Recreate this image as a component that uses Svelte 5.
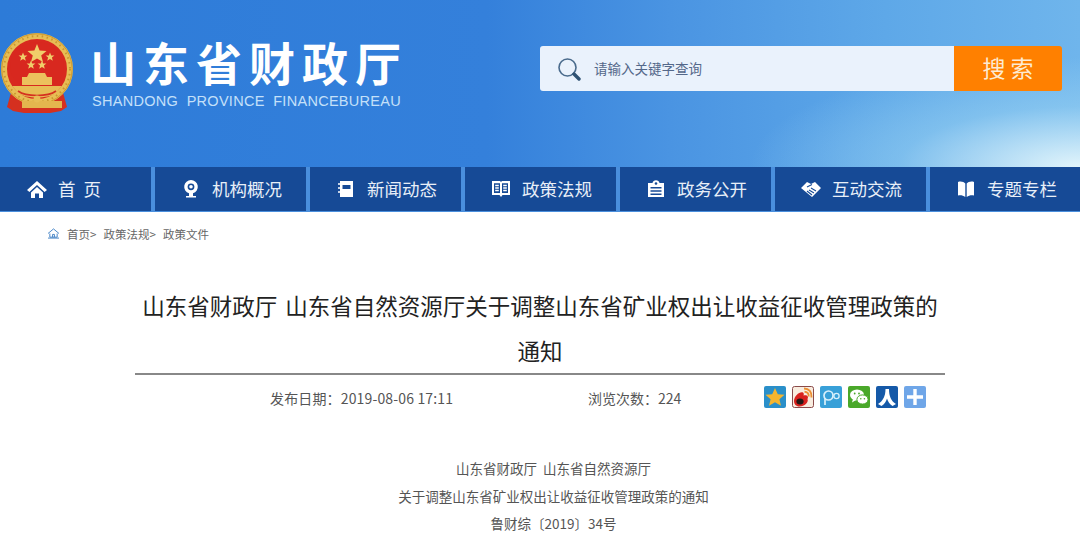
<script>
  const nav = [
    { t: '首  页', i: 'home' },
    { t: '机构概况', i: 'pin' },
    { t: '新闻动态', i: 'note' },
    { t: '政策法规', i: 'book' },
    { t: '政务公开', i: 'doc' },
    { t: '互动交流', i: 'hands' },
    { t: '专题专栏', i: 'open' }
  ];
  const stars = [[23, 24], [50, 24], [31, 32], [42, 32]];
</script>

<div class="page">
  <header class="top">
    <svg class="emblem" viewBox="0 0 74 80" width="74" height="80" aria-hidden="true">
      <path d="M12 56 L7 74 L13 78 L24 80 H50 L61 78 L67 74 L62 56 Z" fill="#d5301f"/>
      <circle cx="37" cy="36" r="33" fill="#d8291f" stroke="#e7bd55" stroke-width="6"/>
      <circle cx="37" cy="36" r="35.2" fill="none" stroke="#d09a2e" stroke-width="1"/>
      <circle cx="37" cy="36" r="33" fill="none" stroke="#c9962f" stroke-width="2" stroke-dasharray="1.5 3.5"/>
      <ellipse cx="37" cy="33" rx="27" ry="24" fill="#d8281f"/>
      <polygon points="37,11 39.6,17.4 46.5,18 41.2,22.4 43,29 37,25.4 31,29 32.8,22.4 27.5,18 34.4,17.4" fill="#f0cd6a"/>
      {#each stars as s}
        <polygon transform="translate({s[0]} {s[1]})" points="0,-4.5 1.2,-1.4 4.4,-1.4 1.9,.6 2.8,3.8 0,2 -2.8,3.8 -1.9,.6 -4.4,-1.4 -1.2,-1.4" fill="#f0cd6a"/>
      {/each}
      <path d="M29 40 H45 L47 44 H52 V52 H22 V44 H27 Z" fill="#ecc15d"/>
      <path d="M12 53 H62 L56 60 C48 66 26 66 18 60 Z" fill="#e7bd55"/>
      <path d="M18 58 C26 64 48 64 56 58" fill="none" stroke="#d5301f" stroke-width="1.6"/>
      <path d="M22 68 H62 V75 H22 Z" fill="#e4b64e"/>
      <circle cx="37" cy="66" r="3.4" fill="#e7bd55"/>
    </svg>
    <div class="brand">
      <div class="cn">山东省财政厅</div>
      <div class="en">SHANDONG&nbsp; PROVINCE&nbsp; FINANCEBUREAU</div>
    </div>
    <div class="search">
      <div class="field">
        <svg viewBox="0 0 24 24" width="24" height="24" aria-hidden="true">
          <circle cx="10.5" cy="10.5" r="8.5" fill="none" stroke="#4a6b8c" stroke-width="1.6"/>
          <path d="M17 17 L22 22" stroke="#2f5273" stroke-width="3.4" stroke-linecap="round"/>
        </svg>
        <span>请输入关键字查询</span>
      </div>
      <div class="btn">搜 索</div>
    </div>
  </header>

  <nav class="nav">
    {#each nav as n, idx}
      <div class="item" class:first={idx === 0}>
        <svg viewBox="0 0 20 20" width="20" height="20" aria-hidden="true">
          {#if n.i === 'home'}
            <path d="M10 2 L20 11 L17.6 13 L10 6 L2.4 13 L0 11 Z" fill="#fff"/>
            <path d="M4 13.5 L10 8 L16 13.5 V19 H12 V14.5 H8 V19 H4 Z" fill="#fff"/>
          {:else if n.i === 'pin'}
            <path fill-rule="evenodd" d="M10 1 A6.8 6.8 0 0 1 12 14.3 V17 H15 V18.6 H5 V17 H8 V14.3 A6.8 6.8 0 0 1 10 1 Z M10 4.4 A3.4 3.4 0 1 0 10 11.2 A3.4 3.4 0 1 0 10 4.4 Z" fill="#fff"/>
            <circle cx="10" cy="7.8" r="1.8" fill="#fff"/>
          {:else if n.i === 'note'}
            <path fill-rule="evenodd" d="M4 2 H17 V18 H4 Z M6.5 6 V10 H14.5 V6 Z" fill="#fff"/>
            <path d="M2 5 H5 M2 9 H5 M2 13 H5" stroke="#fff" stroke-width="1.4"/>
          {:else if n.i === 'book'}
            <path fill-rule="evenodd" d="M1 2 H9 L10 3 L11 2 H19 V16 H11.5 L10 18 L8.5 16 H1 Z M3 4.2 V14 H9 V4.2 Z M11 4.2 V14 H17 V4.2 Z" fill="#fff"/>
            <path d="M4.2 6.5 H7.8 M4.2 9 H7.8 M4.2 11.5 H7.8 M12.2 6.5 H15.8 M12.2 9 H15.8 M12.2 11.5 H15.8" stroke="#fff" stroke-width="1.3"/>
          {:else if n.i === 'doc'}
            <path fill-rule="evenodd" d="M2 4 H6.5 A3.6 3.6 0 0 1 13.5 4 H18 V18 H2 Z M4.5 8 V9.5 H15.5 V8 Z M4.5 11.2 V12.7 H15.5 V11.2 Z M4.5 14.4 V15.9 H15.5 V14.4 Z" fill="#fff"/>
            <circle cx="10" cy="4.5" r="1.3" fill="#164a96"/>
          {:else if n.i === 'hands'}
            <path d="M0 9 L6 3 L10 5 L14 3 L20 9 L11 18 Z" fill="#fff"/>
            <path d="M6 8 L11 5.5 M8 11 L13 14 M6 12 L11 16 M10 9 L15 12" stroke="#164a96" stroke-width="1.1" fill="none"/>
          {:else}
            <path d="M2 3 C5 2 8 3 9.3 4.5 V18 C7 16.5 5 16 2 16.5 Z" fill="#fff"/>
            <path d="M18 3 C15 2 12 3 10.7 4.5 V18 C13 16.5 15 16 18 16.5 Z" fill="#fff"/>
          {/if}
        </svg>
        <span>{n.t}</span>
      </div>
    {/each}
  </nav>

  <div class="crumb">
    <svg viewBox="0 0 14 12" width="13" height="11" aria-hidden="true">
      <path d="M1 6 L7 1 L13 6 M3 6 V10 H11 V6 M1 11 H13 M6 10 V7 H8 V10" fill="none" stroke="#3d7fc4" stroke-width="1"/>
    </svg>
    <span>首页&gt; 政策法规&gt; 政策文件</span>
  </div>

  <main class="article">
    <h1>山东省财政厅 山东省自然资源厅关于调整山东省矿业权出让收益征收管理政策的<br />通知</h1>
    <div class="meta">
      <span class="date">发布日期：2019-08-06 17:11</span>
      <span class="views">浏览次数：224</span>
      <div class="share">
        <svg viewBox="0 0 22 22" width="22" height="22" aria-hidden="true">
          <rect width="22" height="22" rx="2" fill="#2a8fc9"/>
          <polygon points="11,2 13.8,8.2 20.5,8.8 15.4,13.2 17,19.8 11,16.3 5,19.8 6.6,13.2 1.5,8.8 8.2,8.2" fill="#f5b52e"/>
        </svg>
        <svg viewBox="0 0 22 22" width="22" height="22" aria-hidden="true">
          <rect x=".5" y=".5" width="21" height="21" rx="2" fill="#f8ecdf" stroke="#8a4a4a"/>
          <path d="M2 15 C2 10 8 5 11 6.5 C12.5 7.5 11.5 9.5 11.5 9.5 C15 8.5 17 10.5 15.5 13 C17 16 12.5 20.5 7.5 20.5 C4 20.5 2 18 2 15 Z" fill="#d8211e"/>
          <ellipse cx="8" cy="15.5" rx="3.6" ry="3" fill="#231815"/>
          <path d="M12 2.5 C17 2.5 20 6 19.5 11.5 M12.5 5.8 C15.5 5.8 17 8 16.6 10.5" fill="none" stroke="#ec8f33" stroke-width="1.9"/>
        </svg>
        <svg viewBox="0 0 22 22" width="22" height="22" aria-hidden="true">
          <rect width="22" height="22" rx="2" fill="#38a0d8"/>
          <circle cx="8.5" cy="9.5" r="4.5" fill="none" stroke="#d8f0fb" stroke-width="1.7"/>
          <path d="M5 12 V19" stroke="#d8f0fb" stroke-width="1.7"/>
          <circle cx="16.5" cy="10" r="2.6" fill="none" stroke="#d8f0fb" stroke-width="1.3"/>
        </svg>
        <svg viewBox="0 0 22 22" width="22" height="22" aria-hidden="true">
          <rect width="22" height="22" rx="2" fill="#4aa82a"/>
          <ellipse cx="9" cy="9" rx="7" ry="5.6" fill="#fff"/>
          <path d="M5 13 L4 16.5 L8 14 Z" fill="#fff"/>
          <ellipse cx="14.5" cy="13.5" rx="5.6" ry="4.6" fill="#fff" stroke="#4aa82a" stroke-width="1"/>
          <circle cx="6.7" cy="7.5" r=".9" fill="#4aa82a"/>
          <circle cx="11" cy="7.5" r=".9" fill="#4aa82a"/>
          <circle cx="12.8" cy="12.7" r=".8" fill="#4aa82a"/>
          <circle cx="16.4" cy="12.7" r=".8" fill="#4aa82a"/>
        </svg>
        <svg viewBox="0 0 22 22" width="22" height="22" aria-hidden="true">
          <rect width="22" height="22" rx="2" fill="#1559a8"/>
          <path d="M9.5 3 H13 C13 10 15 15 20 18 L16.5 20 C13.5 18 12 15.5 11 12.5 C10 15.5 8.5 18 5.5 20 L2 18 C7 15 9.5 10 9.5 3 Z" fill="#fff"/>
        </svg>
        <svg viewBox="0 0 22 22" width="22" height="22" aria-hidden="true">
          <rect width="22" height="22" rx="2" fill="#6fa6e8"/>
          <path d="M9.3 3 H12.7 V9.3 H19 V12.7 H12.7 V19 H9.3 V12.7 H3 V9.3 H9.3 Z" fill="#fff"/>
        </svg>
      </div>
    </div>
    <div class="body">
      <p>山东省财政厅&nbsp; 山东省自然资源厅</p>
      <p>关于调整山东省矿业权出让收益征收管理政策的通知</p>
      <p>鲁财综〔2019〕34号</p>
    </div>
  </main>
</div>

<style>
  :global(body) { margin: 0; background: #fff; }
  .page {
    width: 1080px; height: 558px; overflow: hidden; background: #fff;
    font-family: "Noto Sans CJK SC", "Liberation Sans", sans-serif;
  }
  .top {
    height: 167px; box-sizing: border-box; padding: 33px 18px 0 0;
    display: flex; align-items: flex-start;
    background:
      radial-gradient(ellipse 330px 110px at 100% 100%, rgba(232,248,252,.95), rgba(160,215,243,.45) 55%, rgba(120,190,235,0) 100%),
      linear-gradient(90deg, #2d7bd8 0%, #3480db 45%, #4a94e2 62%, #5ea8e8 82%, #6fb5ec 100%);
  }
  .emblem { flex: none; }
  .brand { margin-left: 16px; width: 450px; flex: none; color: #fff; }
  .cn {
    font-size: 46px; line-height: 56px; font-weight: 700; letter-spacing: 7px; white-space: nowrap;
  }
  .en {
    font-family: "Liberation Sans", sans-serif; font-size: 14.5px; line-height: 16px;
    color: #c4e0f9; margin-left: 2px; margin-top: 4px; white-space: nowrap; letter-spacing: .28px;
  }
  .search { display: flex; height: 45px; margin-top: 13px; flex: 1; }
  .field {
    flex: 1; display: flex; align-items: center; gap: 13px; padding-left: 17px;
    background: #eaf2fc; border-radius: 3px 0 0 3px; font-size: 13.5px; color: #54688a;
  }
  .field span { padding-bottom: 2px; }
  .btn {
    width: 108px; background: #ff8000; color: #fdebd2; border-radius: 0 3px 3px 0;
    display: flex; align-items: center; justify-content: center; font-size: 23px; white-space: pre;
    padding-bottom: 3px; box-sizing: border-box;
  }
  .nav {
    height: 45px; box-sizing: border-box; display: flex; gap: 4px; background: #4a8fdd;
    padding-bottom: 1px;
  }
  .item {
    width: 151px; flex: none; background: #164a96; color: #e8eff8; font-size: 17.5px;
    display: flex; align-items: center; justify-content: center; gap: 11px; white-space: pre;
    box-sizing: border-box; padding-left: 2px;
  }
  .item span { padding-bottom: 2px; }
  .item.first { padding: 0 23px 0 0; }
  .crumb {
    height: 45px; box-sizing: border-box; padding: 0 0 2px 47px; display: flex; align-items: center; gap: 7px;
    font-size: 11.5px; color: #666; white-space: pre; word-spacing: 4.5px;
  }
  .article { padding: 0 135px; }
  h1 {
    margin: 0; padding: 26px 0 0; height: 118px; box-sizing: border-box;
    font-size: 22.5px; line-height: 45px; font-weight: 400; color: #222; text-align: center;
    border-bottom: 2px solid #888; word-spacing: 3px;
  }
  .meta { display: flex; align-items: center; height: 46px; font-size: 14px; color: #555; white-space: pre; }
  .date { margin-left: 135px; width: 318px; letter-spacing: .15px; }
  .views { width: 176px; }
  .share { display: flex; gap: 6px; margin-bottom: 2px; }
  .share svg { display: block; }
  .body { margin-top: 34px; padding-left: 27px; text-align: center; font-size: 13.5px; color: #555; }
  .body p { margin: 0; line-height: 27.5px; }
</style>
